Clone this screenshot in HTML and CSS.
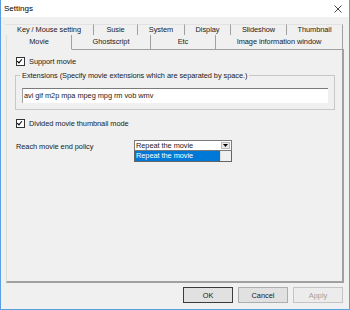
FILE: index.html
```html
<!doctype html>
<html lang="en">
 <head>
  <meta charset="UTF-8">
  <title>Settings</title>
  <link rel="stylesheet" href="styles.css">
 </head>
 <body>
  <div class="window">
   <div class="titlebar">
    <span class="title">Settings</span>
    <svg class="close" width="8" height="8" viewBox="0 0 8 8"><path d="M0.5 0.5 L7.5 7.5 M7.5 0.5 L0.5 7.5" stroke="#333" stroke-width="0.9" fill="none"/></svg>
   </div>
   <div class="client">
    <div class="tabrow back">
     <div class="tab t-key">Key / Mouse setting</div>
     <div class="tab t-susie">Susie</div>
     <div class="tab t-system">System</div>
     <div class="tab t-display">Display</div>
     <div class="tab t-slide">Slideshow</div>
     <div class="tab t-thumb">Thumbnail</div>
    </div>
    <div class="tabrow front">
     <div class="tab t-movie selected">Movie</div>
     <div class="tab t-ghost">Ghostscript</div>
     <div class="tab t-etc">Etc</div>
     <div class="tab t-info">Image information window</div>
    </div>
    <div class="panel">
     <label class="check first"><span class="box checked"></span>Support movie</label>
     <fieldset class="group">
      <legend>Extensions (Specify movie extensions which are separated by space.)</legend>
      <div class="textbox">avi gif m2p mpa mpeg mpg rm vob wmv</div>
     </fieldset>
     <label class="check second"><span class="box checked"></span>Divided movie thumbnail mode</label>
     <div class="policy">
      <span class="policy-label">Reach movie end policy</span>
      <div class="combo">
       <div class="combo-field">
        <span class="combo-text">Repeat the movie</span>
        <span class="combo-btn"><svg width="5" height="3" viewBox="0 0 5 3"><path d="M0 0 H5 L2.5 3 Z" fill="#000"/></svg></span>
       </div>
       <div class="combo-list">
        <span class="combo-item">Repeat the movie</span>
        <span class="combo-scroll"></span>
       </div>
      </div>
     </div>
    </div>
    <div class="buttons">
     <button class="btn default">OK</button>
     <button class="btn">Cancel</button>
     <button class="btn disabled">Apply</button>
    </div>
   </div>
  </div>
 </body>
</html>
```
FILE: styles.css
```css
html, body {
  margin: 0;
  padding: 0;
  background: #fff;
}

body {
  font-family: "Liberation Sans", Arial, sans-serif;
  font-size: 7.4px;
  letter-spacing: -0.05px;
  color: #1a1a1a;
}

.window {
  width: 350px;
  height: 310px;
  box-sizing: border-box;
  border: 1px solid #5a9fe0;
  border-top: none;
  display: flex;
  flex-direction: column;
  background: #f0f0f0;
}

.titlebar {
  height: 17px;
  background: #fff;
  display: flex;
  align-items: center;
  justify-content: space-between;
  padding: 0 7px 0 3px;
}

.title {
  font-size: 8px;
  letter-spacing: 0;
  color: #000;
}

.close {
  display: block;
}

.client {
  flex: 1;
  display: flex;
  flex-direction: column;
}

/* tabs */
.tabrow {
  display: flex;
}

.tabrow.back {
  height: 11px;
  margin: 7px 0 0 4px;
}

.tabrow.front {
  height: 15px;
  margin-left: 5px;
}

.tab {
  box-sizing: border-box;
  border-right: 1px solid #a0a0a0;
  text-align: center;
  line-height: 14px;
  white-space: nowrap;
}

.back .tab {
  border-top: 1px solid #e2e2e2;
  line-height: 10px;
}

.front .tab {
  border-bottom: 1px solid #a0a0a0;
}

.front .tab.selected {
  border-bottom-color: #f0f0f0;
  border-left: 1px solid #dcdcdc;
  position: relative;
  z-index: 1;
}

.t-key { width: 89px; }
.t-susie { width: 44px; }
.t-system { width: 47px; }
.t-display { width: 46px; }
.t-slide { width: 56px; }
.t-thumb { width: 56px; }

.t-movie { width: 66px; }
.t-ghost { width: 79px; }
.t-etc { width: 65px; }
.t-info { width: 127px; }

/* panel */
.panel {
  width: 338px;
  height: 234px;
  box-sizing: border-box;
  margin: -1px 0 0 5px;
  border: 1px solid #dcdcdc;
  border-right: 2px solid #a0a0a0;
  border-bottom: 2px solid #a0a0a0;
  border-top: none;
  padding: 8px 0 0 9px;
}

.check {
  display: flex;
  align-items: center;
  height: 9px;
  gap: 4px;
}

.box {
  width: 7px;
  height: 7px;
  border: 1px solid #333;
  background: #fff;
  position: relative;
}

.box.checked::after {
  content: "";
  position: absolute;
  left: 1px;
  top: 0;
  width: 2px;
  height: 4px;
  border: solid #000;
  border-width: 0 1.5px 1.5px 0;
  transform: rotate(40deg);
}

.group {
  margin: 5px 7px 0 -1px;
  padding: 8px 6px 6px 6px;
  border: 1px solid #c8c8c8;
}

.group legend {
  padding: 0 2px;
  margin-left: -2px;
  line-height: 9px;
}

.textbox {
  height: 15px;
  box-sizing: border-box;
  background: #fff;
  border-top: 1px solid #7a7a7a;
  border-left: 1px solid #a0a0a0;
  padding-left: 1px;
  line-height: 14px;
}

.check.second {
  margin-top: 9px;
}

.policy {
  display: flex;
  margin-top: 12px;
}

.policy-label {
  width: 118px;
  line-height: 11px;
  margin-top: 1px;
}

.combo {
  width: 98px;
}

.combo-field {
  height: 11px;
  box-sizing: border-box;
  border: 1px solid #7a7a7a;
  background: #fff;
  display: flex;
  justify-content: space-between;
  align-items: stretch;
}

.combo-text {
  padding-left: 1px;
  line-height: 9px;
}

.combo-btn {
  width: 9px;
  margin: 1px;
  background: #e8e8e8;
  border: 1px solid #bbb;
  box-sizing: border-box;
  display: flex;
  align-items: center;
  justify-content: center;
}

.combo-list {
  height: 11px;
  box-sizing: border-box;
  border: 1px solid #646464;
  border-top: none;
  background: #fff;
  display: flex;
}

.combo-item {
  flex: 1;
  background: #0078d7;
  color: #fff;
  line-height: 10px;
  padding-left: 1px;
}

.combo-scroll {
  width: 10px;
  background: #f0f0f0;
  border-left: 1px solid #ddd;
}

/* buttons */
.buttons {
  display: flex;
  justify-content: flex-end;
  gap: 5px;
  margin: 4px 6px 0 0;
}

.btn {
  width: 50px;
  height: 16px;
  box-sizing: border-box;
  padding: 0;
  font-family: inherit;
  font-size: 7.4px;
  color: #1a1a1a;
  background: #e1e1e1;
  border: 1px solid #adadad;
}

.btn.default {
  border-color: #3c3c3c;
}

.btn.disabled {
  color: #a0a0a0;
  background: #ececec;
  border-color: #c4c4c4;
}
```
